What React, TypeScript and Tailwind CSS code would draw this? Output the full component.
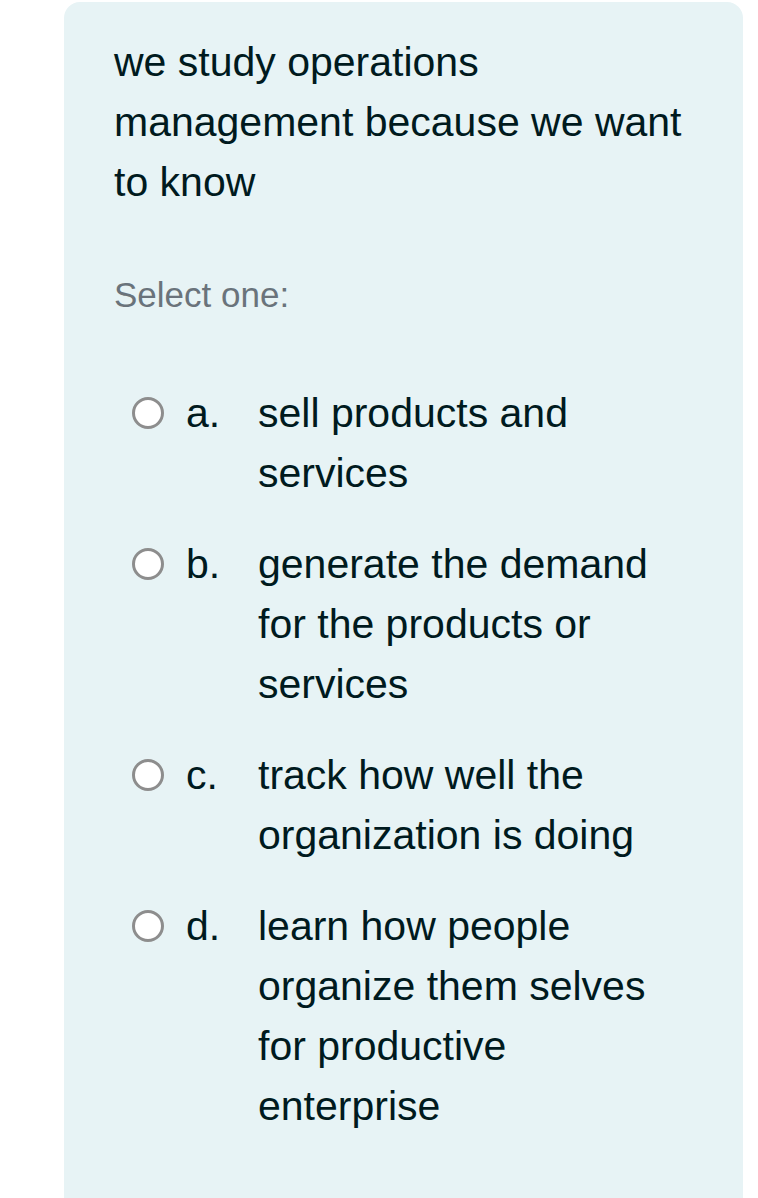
import React from "react";

const options = [
  { letter: "a.", text: "sell products and services" },
  { letter: "b.", text: "generate the demand for the products or services" },
  { letter: "c.", text: "track how well the organization is doing" },
  { letter: "d.", text: "learn how people organize them selves for productive enterprise" },
];

export default function App() {
  return (
    <div className="h-[1198px] overflow-hidden bg-white pt-[2px] pl-[64px] font-['Liberation_Sans',Arial,sans-serif]">
      <div className="h-[1196px] w-[679px] rounded-t-[16px] bg-[#e7f3f5] pl-[50px] pr-[50px] pt-[30px]">
        <div className="text-[41px] leading-[60px] text-[#001a1e]">
          we study operations management because we want to know
        </div>

        <div className="mt-[58px] text-[35px] leading-[50px] text-[#6a737b]">
          Select one:
        </div>

        <div className="mt-[63px] flex flex-col gap-[31px] pl-[18px]">
          {options.map((o) => (
            <div key={o.letter} className="flex items-start text-[41px] leading-[60px] text-[#001a1e]">
              <div className="flex h-[60px] w-[54px] shrink-0 items-center">
                <span className="block h-[32px] w-[32px] rounded-full border-[3px] border-[#8d8d8d] bg-white" />
              </div>
              <div className="w-[72px] shrink-0">{o.letter}</div>
              <div className="w-[420px]">{o.text}</div>
            </div>
          ))}
        </div>
      </div>
    </div>
  );
}
